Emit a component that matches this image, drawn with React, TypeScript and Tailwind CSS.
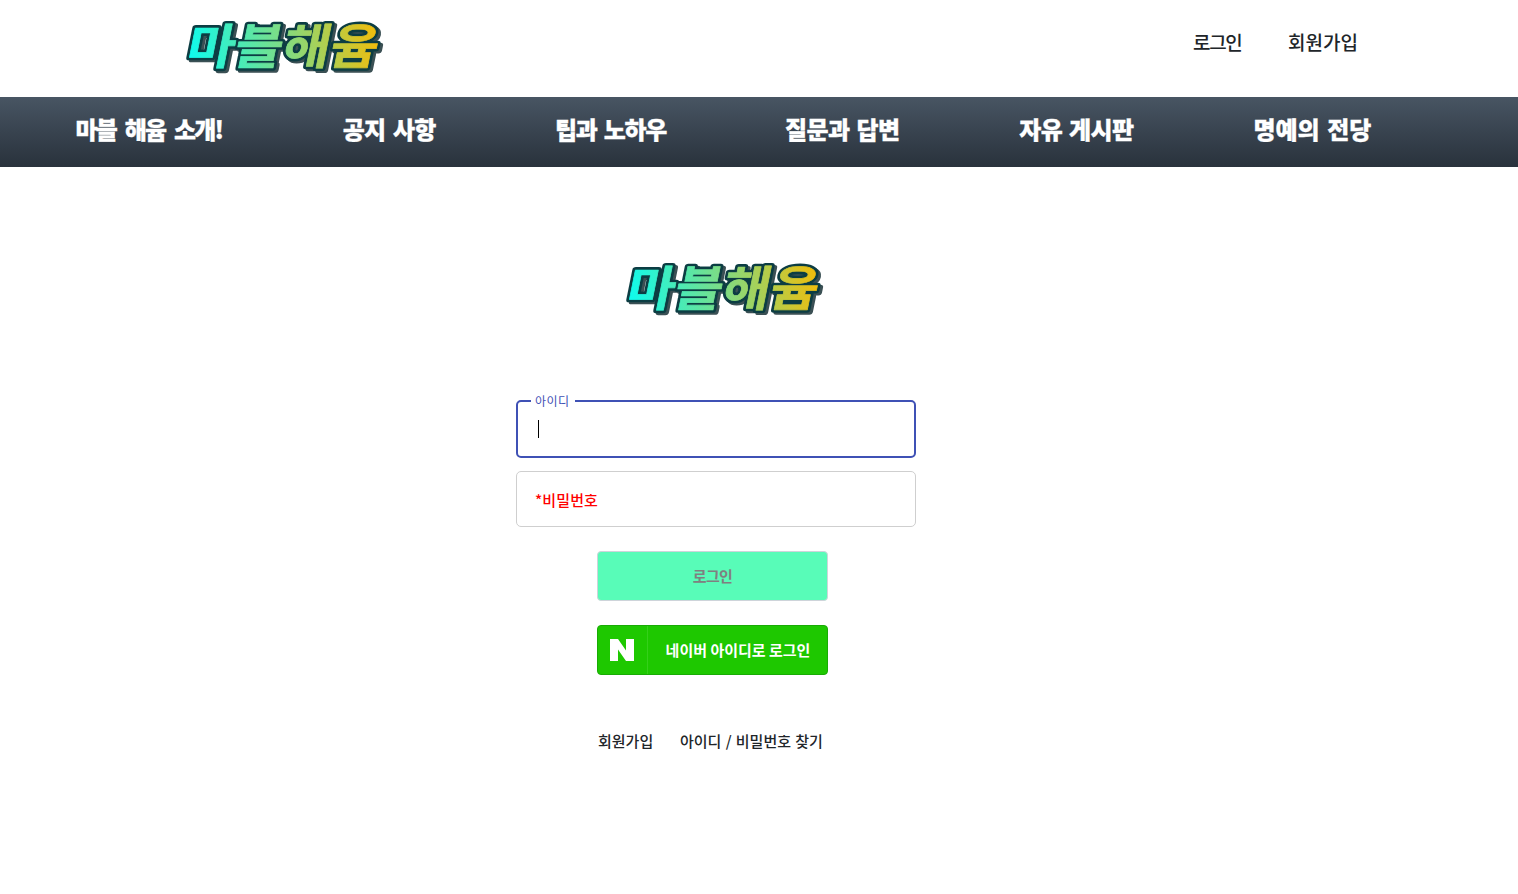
import React from "react";

function Logo({ id }: { id: string }) {
  const gradient = `logo-fill-${id}`;
  const word = {
    x: 0,
    y: 0,
    fontSize: 50,
    fontWeight: 700,
    textLength: 191,
    lengthAdjust: "spacingAndGlyphs" as const,
    strokeLinejoin: "round" as const,
  };
  return (
    <svg width="200" height="58" viewBox="0 0 200 58" className="block overflow-visible font-['Noto_Sans_CJK_KR',sans-serif]" role="img" aria-label="마블해윰">
      <defs>
        <linearGradient id={gradient} gradientUnits="userSpaceOnUse" x1="8" y1="0" x2="176" y2="-60">
          <stop offset="0" stopColor="#10fbec" />
          <stop offset="0.5" stopColor="#7fdc83" />
          <stop offset="1" stopColor="#f0bd0c" />
        </linearGradient>
      </defs>
      <g transform="translate(-0.5 45.5) scale(1 0.96) skewX(-11)">
        <text {...word} transform="translate(3 3)" fill="#3b5054" stroke="#3b5054" strokeWidth="6">마블해윰</text>
        <text {...word} fill="#0c3d43" stroke="#0c3d43" strokeWidth="6">마블해윰</text>
        <text {...word} fill={`url(#${gradient})`} stroke={`url(#${gradient})`} strokeWidth="0.7">마블해윰</text>
      </g>
    </svg>
  );
}

const menu = [
  { label: "마블 해윰 소개!", box: "w-[148px] tracking-[-1.8px] [word-spacing:5px]" },
  { label: "공지 사항", box: "w-[93px] tracking-[-0.8px] [word-spacing:3px]" },
  { label: "팁과 노하우", box: "w-[111px] tracking-[-1.3px] [word-spacing:3px]" },
  { label: "질문과 답변", box: "w-[115px] tracking-[-0.6px] [word-spacing:2px]" },
  { label: "자유 게시판", box: "w-[115px] tracking-[-0.6px] [word-spacing:2px]" },
  { label: "명예의 전당", box: "w-[119px] tracking-[0px] [word-spacing:2px]" },
];

export default function App() {
  return (
    <div className="h-[894px] w-full overflow-hidden bg-white font-['Noto_Sans_CJK_KR',sans-serif] text-[#212529]">
      <header className="flex h-[97px] items-start justify-between pl-[185px] pr-[160px] pt-[18px]">
        <Logo id="header" />
        <nav className="flex gap-[47px] pt-[10px] text-[19px] leading-[28px] font-medium whitespace-nowrap">
          <a className="block w-[48px] tracking-[-1.3px]">로그인</a>
          <a className="block w-[70px]">회원가입</a>
        </nav>
      </header>

      <nav className="flex h-[70px] gap-[119.2px] bg-linear-to-b from-[#485563] to-[#29323c] pl-[75.5px] pt-[14px] text-[24px] leading-[36px] font-black whitespace-nowrap text-white [-webkit-text-stroke:0.3px_white]">
        {menu.map((item) => (
          <a key={item.label} className={`block shrink-0 ${item.box}`}>{item.label}</a>
        ))}
      </nav>

      <main>
        <div className="ml-[625px] pt-[93px]">
          <Logo id="form" />
        </div>
        <form className="ml-[516px] w-[400px] pt-[74px]">
          <fieldset className="h-[66px] rounded-[5px] border-2 border-[#3f51b5] pl-[13px]">
            <legend className="h-[18px] w-[44px] pl-[4px] text-[12px] leading-[18px] tracking-[0.4px] text-[#3f51b5]">아이디</legend>
            <div className="mt-[10px] ml-[7px] h-[18px] w-px bg-black" />
          </fieldset>
          <div className="mt-[13px] flex h-[56px] items-center rounded-[5px] border border-[#cfcfcf] pt-[2px] pl-[18px] text-[15px] font-medium tracking-[0.1px] text-[#f00]">
            *비밀번호
          </div>
          <div className="ml-[81px] w-[231px]">
            <button type="button" className="mt-6 flex h-[50px] w-full items-center justify-center rounded-[4px] border border-[#ced4da] bg-[#58fcb8] text-[15px] font-bold tracking-[-0.7px] text-[#808080]">
              로그인
            </button>
            <button type="button" className="mt-6 flex h-[50px] w-full items-center rounded-[4px] border border-[#19ab05] bg-[#1ec800] text-[15px] font-bold text-white">
              <span className="flex h-full w-[50px] items-center justify-center border-r border-[#35d01b] pr-[2px]">
                <svg width="24" height="22" viewBox="0 0 24 22" fill="white"><path d="M0 0h8l8 11.5V0h8v22h-8L8 10.5V22H0z" /></svg>
              </span>
              <span className="flex-1 pl-px whitespace-nowrap">네이버 아이디로 로그인</span>
            </button>
            <div className="mt-[54px] flex gap-[27px] pl-px text-[15px] leading-6 font-medium whitespace-nowrap">
              <a className="block w-[55px]">회원가입</a>
              <a className="block [word-spacing:0.9px]">아이디 / 비밀번호 찾기</a>
            </div>
          </div>
        </form>
      </main>
    </div>
  );
}
